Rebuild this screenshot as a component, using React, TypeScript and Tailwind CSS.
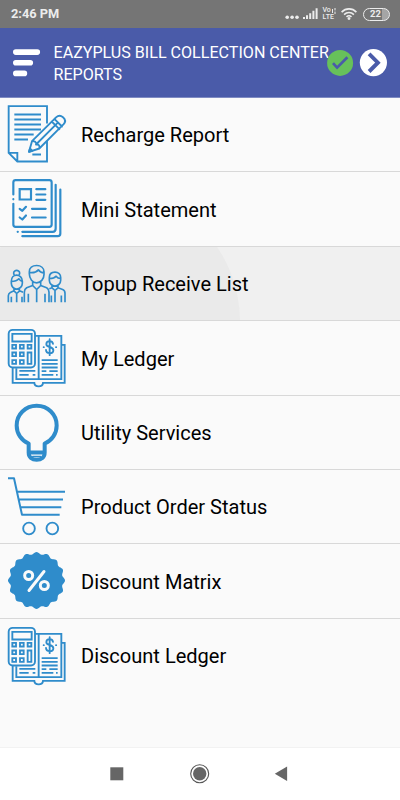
import React from 'react';

interface MenuItem {
    label: string;
    icon: React.ReactNode;
    pressed?: boolean;
}

// outline of the discount seal, sixteen soft lobes
const sealPoints = Array.from({ length: 192 }, (_, i) => {
    const a = (i / 192) * Math.PI * 2;
    const r = 82 + 3.5 * Math.cos(16 * a);
    return `${(109.5 + r * Math.sin(a)).toFixed(1)},${(111 - r * Math.cos(a)).toFixed(1)}`;
}).join(' ');

function Icon({ children, width = 5.6 }: { children: React.ReactNode; width?: number }) {
    return (
        <svg
            className="h-[74px] w-[75px] shrink-0"
            viewBox="0 1.5 225 222"
            fill="none"
            stroke="#2f8ccb"
            strokeWidth={width}
            strokeLinecap="round"
            strokeLinejoin="round"
        >
            {children}
        </svg>
    );
}

function ReportIcon() {
    return (
        <Icon>
            <path d="M141 78V26H26v140l26 26h89v-62M26 166h26v26" strokeLinecap="butt" strokeLinejoin="miter" />
            <path d="M43 51h80M43 66h80M43 81h80M43 96h80M43 111h58M43 126h41M97 171h26" strokeLinecap="butt" />
            <path d="M87 163l9-32 73-72c6-6 14-5 20 0 7 6 8 14 2 21l-73 73zM96 131c8-1 13 3 13 10 7-1 11 3 9 12M108 141l64-64M155 72l23 23M163 64l23 23" />
            <path d="M87 163l3-10 7 7z" fill="#2f8ccb" />
        </Icon>
    );
}

function StatementIcon() {
    return (
        <Icon width={6.5}>
            <path d="M40 69V33q0-7 7-7h101q7 0 7 7v126q0 7-7 7H47q-7 0-7-7V97M40 83v.5" />
            <path d="M167 40v131q0 10-9 10H67M181 54v132q0 8-8 8H67M53 181h.5" />
            <path d="M59 53h34v31H59z" strokeLinejoin="miter" />
            <path d="M109 53h27M109 69h27M109 85h27M96 112h41M96 138h41M59 112l8 6 11-12M59 138l8 6 11-12" />
        </Icon>
    );
}

function PeopleIcon() {
    return (
        <Icon width={5}>
            <path d="M88 82V76c0-12 9-19 22-19s22 8 22 19v8c0 14-10 25-22 25S88 97 88 82zM89 78c12 2 20-1 26-8 4 6 10 9 17 9M98 105v12M122 105v12M98 117l12 12 12-12M98 117l-18 7c-5 3-7 7-7 13v30M122 117l18 7c5 3 7 7 7 13v30M110 129v38M85 142v25M135 142v25" strokeLinecap="butt" />
            <path d="M43 85a9 8 0 1 1 14 0M34 104c0-11 7-18 16-18s17 7 17 18v6c0 10-8 18-17 18s-16-8-16-18zM34 105c10 0 18-3 23-9M57 96c2 5 5 8 10 9M42 126v7M58 126v7M42 133l8 8 9-8 10 4M42 133l-11 5c-4 2-6 5-6 10v19M50 141v26M34 151v16M66 151v16" strokeLinecap="butt" />
            <path d="M148 98v-5c0-10 7-16 17-16s17 7 17 16v8c0 10-8 18-17 18s-17-8-17-18zM149 96c10 0 15-2 19-7 4 5 8 7 14 7M156 117v7M174 117v7M156 124l9 8 9-8 14 5c5 2 7 6 7 11v27M156 124l-8 3M165 132v35M154 147v20M184 147v20" strokeLinecap="butt" />
        </Icon>
    );
}

function LedgerIcon() {
    return (
        <Icon>
            <rect x="26" y="28" width="79" height="113" rx="12" />
            <path d="M37 40h58v23H37zM37 73h11v11H37zM60 73h11v11H60zM83 73h11v11H83zM37 96h11v11H37zM60 96h11v11H60zM37 119h11v11H37zM60 119h11v11H60zM83 96h11v34H83z" strokeLinejoin="miter" />
            <path d="M106 46h78v130h-68V46M116 176H49v-33M38 142v45h65c1 14 25 14 26 0h65V73h-10M58 151h48M58 163h28M98 163h8M125 119h48M125 130h48M125 141h48M125 152h14M148 152h25M125 163h35M168 163h5" strokeLinejoin="miter" strokeLinecap="butt" />
            <path d="M159 70c-1-6-5-8-10-8-6 0-10 4-10 9 0 11 21 6 21 18 0 6-5 9-11 9-7 0-11-4-11-10M149 56v48M131 80h.5M168 80h.5" />
        </Icon>
    );
}

function BulbIcon() {
    return (
        <Icon width={12}>
            <path d="M86 171v-27c-22-9-36-30-36-54 0-33 26-59 60-59s60 26 60 59c0 24-14 45-36 54v27zM86 171c0 14 10 22 24 22s24-8 24-22" strokeLinecap="butt" />
            <path d="M98 183h24" strokeWidth="4" />
        </Icon>
    );
}

function CartIcon() {
    return (
        <Icon>
            <path d="M24 26h18l24 110h113M52 67h143M57 90h132M62 113h122" strokeLinecap="butt" strokeWidth="6" />
            <circle cx="87" cy="177" r="17.5" />
            <circle cx="157" cy="177" r="17.5" />
        </Icon>
    );
}

function DiscountIcon() {
    return (
        <Icon>
            <polygon points={sealPoints} fill="#2f8ccb" stroke="none" />
            <g stroke="#fafafa" strokeWidth="9">
                <circle cx="86" cy="96" r="12" />
                <circle cx="133" cy="126" r="12" />
                <path d="M132 84l-45 57" />
            </g>
        </Icon>
    );
}

const menuItems: MenuItem[] = [
    { label: 'Recharge Report', icon: <ReportIcon /> },
    { label: 'Mini Statement', icon: <StatementIcon /> },
    { label: 'Topup Receive List', icon: <PeopleIcon />, pressed: true },
    { label: 'My Ledger', icon: <LedgerIcon /> },
    { label: 'Utility Services', icon: <BulbIcon /> },
    { label: 'Product Order Status', icon: <CartIcon /> },
    { label: 'Discount Matrix', icon: <DiscountIcon /> },
    { label: 'Discount Ledger', icon: <LedgerIcon /> },
];

function StatusBar() {
    return (
        <div className="flex h-7 items-center justify-between bg-[#757575] pr-[11px] pl-[11px] text-[#ececec]">
            <span className="pt-px text-[12.8px] leading-none font-bold">2:46 PM</span>
            <div className="flex items-center">
                <svg className="h-7 w-[36px]" viewBox="0 0 36 28" fill="#ececec">
                    <circle cx="3.2" cy="17.2" r="1.8" />
                    <circle cx="8.1" cy="17.2" r="1.8" />
                    <circle cx="13" cy="17.2" r="1.8" />
                    <path d="M19 17h2v2h-2zM22 15.3h2V19h-2zM25.2 13.2h2V19h-2zM28.4 10.8h2V19h-2zM31.6 8.2h2V19h-2z" />
                </svg>
                <div className="ml-[3px] flex w-[14px] flex-col text-[7px] leading-[7px] font-medium">
                    <span className="flex h-[7px] items-center whitespace-nowrap">
                        Vo
                        <svg className="ml-[1px] h-[6px] w-[4px]" viewBox="0 0 4 6" fill="none" stroke="#ececec">
                            <path d="M.5 1v4M3 0v2.4M3 3.6V6" />
                        </svg>
                    </span>
                    <span className="h-[7px] tracking-[0.2px]">LTE</span>
                </div>
                <svg className="ml-[4px] h-7 w-[16px]" viewBox="0 0 16 28" fill="none" stroke="#ececec" strokeWidth="1.6">
                    <path d="M.6 12.1c4.2-4.3 10.6-4.3 14.8 0M3.1 14.6c2.8-2.8 7-2.8 9.8 0M5.5 16.9c1.5-1.4 3.5-1.4 5 0" />
                    <circle cx="8" cy="18.5" r=".7" fill="#ececec" />
                </svg>
                <div className="mr-[-0.5px] ml-[6px] flex h-[13px] w-[27px] items-center justify-center rounded-full border border-[#ececec] bg-linear-to-r from-[#757575] from-70% to-[#a5a5a5] to-70% pr-[1px] text-[9.5px] leading-none font-bold">
                    22
                </div>
            </div>
        </div>
    );
}

function Header() {
    return (
        <header className="relative flex h-[70px] border-b border-[#7f8bc2] bg-[#4a5ba9]">
            <svg className="mt-[20px] ml-[12px] h-[30px] w-[30px]" viewBox="0 0 30 30" stroke="white" strokeWidth="5.6" strokeLinecap="round">
                <path d="M3.8 4.1h21.5M3.8 14.7h14.5M3.8 25.4h8.6" />
            </svg>
            <h1 className="mt-[14px] ml-[11.5px] w-[290px] text-[16.1px] leading-[21.5px] text-white">
                EAZYPLUS BILL COLLECTION CENTER REPORTS
            </h1>
            {/* badges float over the end of the title */}
            <svg className="absolute top-[21px] right-[12px] h-[28px] w-[62px]" viewBox="0 0 62 28" fill="none">
                <circle cx="14.1" cy="13.9" r="13" fill="#67c15a" />
                <path d="M7 14.1l4.1 4.5 10.3-10.3" stroke="#4a5ba9" strokeWidth="2.7" />
                <circle cx="47.4" cy="13.6" r="13.6" fill="white" />
                <path d="M43.1 4.9l8.8 8.8-8.8 8.8" stroke="#4a5ba9" strokeWidth="3.9" />
            </svg>
        </header>
    );
}

function MenuRow({ item }: { item: MenuItem }) {
    return (
        <li className={`relative flex h-[74.4px] items-start overflow-hidden border-b border-[#d8d8d8] last:border-b-0 ${item.pressed ? 'bg-[#f0f0f0]' : ''}`}>
            {item.pressed && <span className="absolute top-[-57px] left-[-22px] h-[262px] w-[262px] rounded-full bg-[#eaeaea]" />}
            <span className="relative flex w-full items-center">
                {item.icon}
                <span className="ml-[6px] pt-px text-[20.05px] whitespace-nowrap text-black">{item.label}</span>
            </span>
        </li>
    );
}

function NavigationBar() {
    return (
        <nav className="flex h-[53px] items-center border-t border-[#f2f2f2] bg-white">
            <svg className="h-[52px] w-full" viewBox="0 0 400 52" fill="#666">
                <path d="M110.3 19.3h13v13h-13z" />
                <circle cx="199.7" cy="25.7" r="6.7" />
                <circle cx="199.7" cy="25.7" r="9" fill="none" stroke="#555" strokeWidth="1.1" />
                <path d="M274.8 25.7l12.3-7.3V33z" />
            </svg>
        </nav>
    );
}

export default function App() {
    return (
        <div className="flex h-[800px] w-[400px] flex-col overflow-hidden bg-[#fafafa] font-[Roboto,sans-serif]">
            <StatusBar />
            <Header />
            <main className="flex-1">
                <ul>
                    {menuItems.map((item, i) => (
                        <MenuRow key={i} item={item} />
                    ))}
                </ul>
            </main>
            <NavigationBar />
        </div>
    );
}
